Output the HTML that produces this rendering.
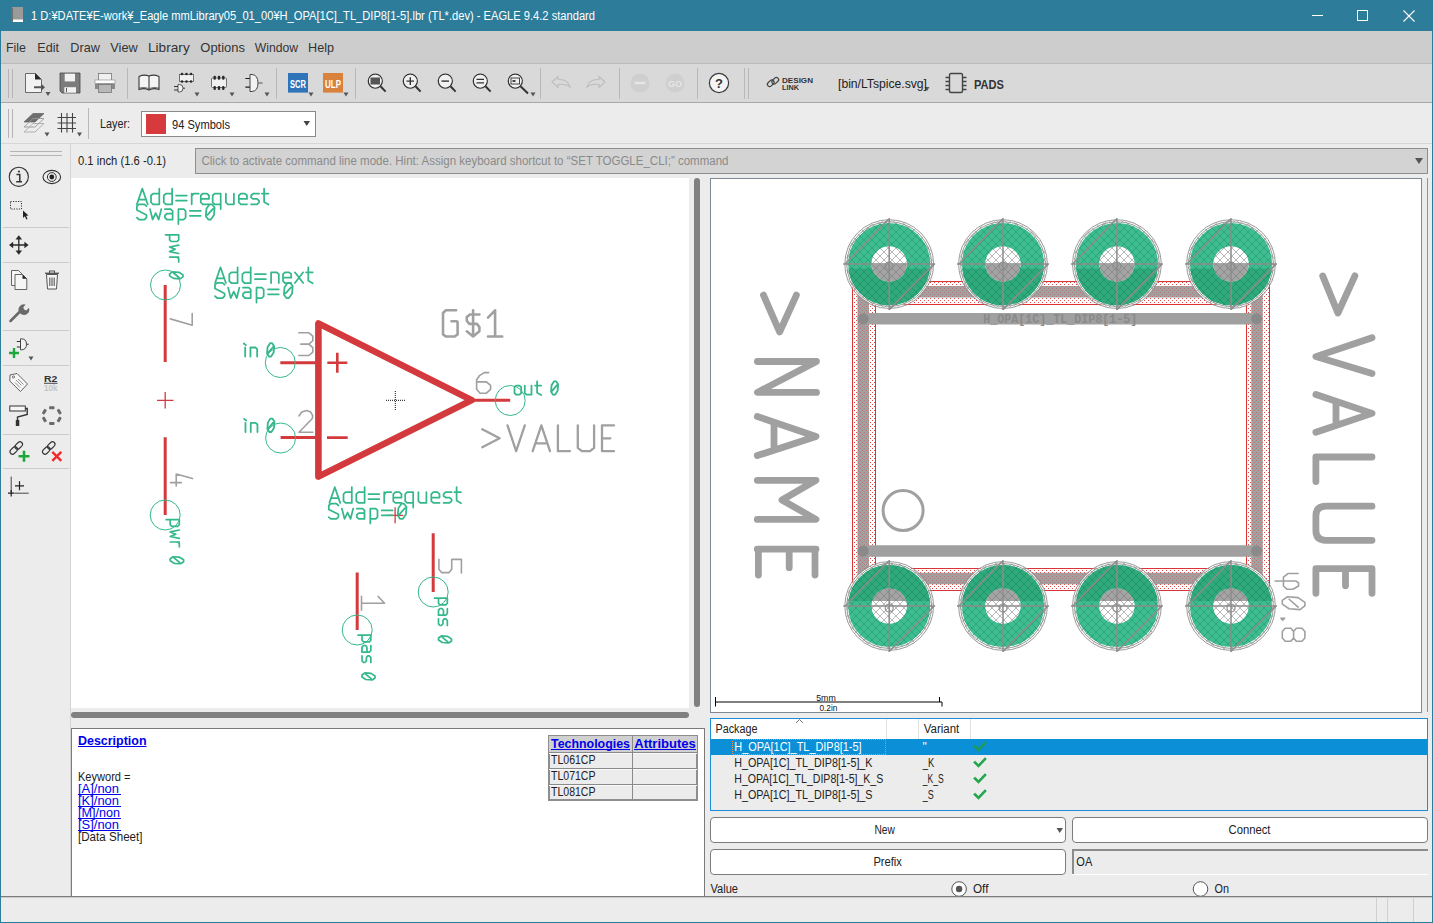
<!DOCTYPE html>
<html><head><meta charset="utf-8">
<style>
html,body{margin:0;padding:0;width:1433px;height:923px;overflow:hidden;background:#ececec;}
svg{display:block;}
text{font-family:"Liberation Sans",sans-serif;}
.m{font-family:"Liberation Mono",monospace;}
</style></head><body>
<svg width="1433" height="923" viewBox="0 0 1433 923">
<defs>
<pattern id="hatch" patternUnits="userSpaceOnUse" width="4" height="4">
<rect width="4" height="4" fill="#3cbc90"/>
<path d="M0 4 L4 0 M0 0 L4 4" stroke="#2ea67a" stroke-width="0.8"/>
</pattern>
<pattern id="reddots" patternUnits="userSpaceOnUse" width="4" height="4">
<rect x="1" y="1" width="1.2" height="1.2" fill="#e05050"/>
</pattern>
</defs>
<rect x="0" y="0" width="1433" height="923" fill="#ececec"/>
<!-- title bar -->
<rect x="0" y="0" width="1433" height="31" fill="#2d7d9a"/>
<rect x="0" y="0" width="1" height="923" fill="#2d7d9a"/>
<rect x="1432" y="0" width="1" height="923" fill="#2d7d9a"/>
<rect x="0" y="922" width="1433" height="1" fill="#2d7d9a"/>
<g><rect x="12" y="7" width="11" height="13" fill="#9a9a9a"/><rect x="11" y="8" width="2" height="14" fill="#6e6e6e"/><rect x="13" y="19.5" width="10" height="2.5" fill="#ffffff"/></g>
<text x="31" y="19.5" font-size="12" fill="#ffffff" textLength="564" lengthAdjust="spacingAndGlyphs">1 D:¥DATE¥E-work¥_Eagle mmLibrary05_01_00¥H_OPA[1C]_TL_DIP8[1-5].lbr (TL*.dev) - EAGLE 9.4.2 standard</text>
<rect x="1312" y="15" width="11" height="1" fill="#ffffff"/>
<rect x="1357.5" y="10.5" width="10" height="10" fill="none" stroke="#ffffff" stroke-width="1"/>
<path d="M1403.5 10.5 L1414.5 21.5 M1414.5 10.5 L1403.5 21.5" stroke="#ffffff" stroke-width="1.1"/>
<!-- menu bar -->
<rect x="1" y="31" width="1431" height="32" fill="#cdcdcd"/>
<rect x="1" y="63" width="1431" height="1" fill="#bababa"/>
<g font-size="13.5" fill="#333333">
<text x="6" y="52" textLength="20" lengthAdjust="spacingAndGlyphs">File</text>
<text x="37.3" y="52" textLength="21.7" lengthAdjust="spacingAndGlyphs">Edit</text>
<text x="70.3" y="52" textLength="29.6" lengthAdjust="spacingAndGlyphs">Draw</text>
<text x="110.3" y="52" textLength="27.4" lengthAdjust="spacingAndGlyphs">View</text>
<text x="148" y="52" textLength="41.7" lengthAdjust="spacingAndGlyphs">Library</text>
<text x="200.3" y="52" textLength="44.7" lengthAdjust="spacingAndGlyphs">Options</text>
<text x="254.7" y="52" textLength="43.3" lengthAdjust="spacingAndGlyphs">Window</text>
<text x="308" y="52" textLength="26" lengthAdjust="spacingAndGlyphs">Help</text>
</g>
<!-- toolbar 1 -->
<rect x="1" y="64" width="1431" height="38" fill="#d9d9d9"/>
<rect x="1" y="102" width="1431" height="1" fill="#a8a8a8"/>
<!-- toolbar 2 -->
<rect x="1" y="103" width="1431" height="40" fill="#ececec"/>
<rect x="1" y="143" width="1431" height="1" fill="#d6d6d6"/>
<!-- left panel -->
<rect x="70" y="144" width="1" height="753" fill="#d4d4d4"/>
<!-- command line -->
<text x="78" y="165" font-size="12" fill="#222" textLength="88" lengthAdjust="spacingAndGlyphs">0.1 inch (1.6 -0.1)</text>
<rect x="195.5" y="148.5" width="1232" height="25" fill="#d3d3d3" stroke="#8e8e8e" stroke-width="1"/>
<text x="201.5" y="164.5" font-size="12" fill="#8a8a8a" textLength="527" lengthAdjust="spacingAndGlyphs">Click to activate command line mode. Hint: Assign keyboard shortcut to “SET TOGGLE_CLI;” command</text>
<path d="M1415 158 L1423 158 L1419 164 Z" fill="#555"/>
<!-- schematic canvas -->
<rect x="71" y="178" width="618" height="530" fill="#ffffff"/>
<rect x="694" y="178" width="6" height="529" rx="3" fill="#808080"/>
<rect x="71" y="712" width="618" height="6" rx="3" fill="#808080"/>
<!-- preview -->
<rect x="710.5" y="178.5" width="711" height="534" fill="#ffffff" stroke="#7d8a96" stroke-width="1"/>
<rect x="1427" y="178" width="1" height="534" fill="#8a96a2"/>

<!-- grips -->
<g fill="#b4b4b4">
<rect x="8" y="69" width="1" height="29"/><rect x="12" y="69" width="1" height="29"/>
<rect x="8" y="109" width="1" height="29"/><rect x="12" y="109" width="1" height="29"/>
<rect x="10" y="151" width="52" height="1"/><rect x="10" y="155" width="52" height="1"/>
</g>
<!-- separators toolbar1 -->
<g fill="#b8b8b8">
<rect x="127" y="68" width="1" height="31"/>
<rect x="276" y="68" width="1" height="31"/>
<rect x="355" y="68" width="1" height="31"/>
<rect x="540" y="68" width="1" height="31"/>
<rect x="619" y="68" width="1" height="31"/>
<rect x="697" y="68" width="1" height="31"/>
<rect x="744" y="68" width="1" height="31"/>
<rect x="748" y="68" width="1" height="31"/>
<rect x="88" y="108" width="1" height="31"/>
</g>
<!-- dropdown arrows -->
<g fill="#555555">
<path d="M45.5 92 L50.5 92 L48 96 Z"/>
<path d="M194.5 92.5 L199.5 92.5 L197 96.5 Z"/>
<path d="M229.5 92.5 L234.5 92.5 L232 96.5 Z"/>
<path d="M264.5 92.5 L269.5 92.5 L267 96.5 Z"/>
<path d="M308.5 92.5 L313.5 92.5 L311 96.5 Z"/>
<path d="M343.5 92.5 L348.5 92.5 L346 96.5 Z"/>
<path d="M530.5 92.5 L535.5 92.5 L533 96.5 Z"/>
<path d="M924.5 87 L929.5 87 L927 91 Z"/>
<path d="M44.5 132.5 L49.5 132.5 L47 136.5 Z"/>
<path d="M77 132.5 L82 132.5 L79.5 136.5 Z"/>
<path d="M28.5 356.5 L33.5 356.5 L31 360.5 Z"/>
</g>
<!-- new -->
<path d="M25.5 73.5 L35.5 73.5 L41.5 79.5 L41.5 92.5 L25.5 92.5 Z" fill="#f2f2f2" stroke="#6a6a6a" stroke-width="1"/>
<path d="M35 73 L41.5 79.5 L35 79.5 Z" fill="#2a2a2a"/>
<path d="M34 86.2 L41 86.2 L41 83.5 L45 87.2 L41 91 L41 88.2 L34 88.2 Z" fill="#555555"/>
<!-- save -->
<path d="M60 73 L80 73 L80 93 L62 93 L60 91 Z" fill="#7c7c7c" stroke="#4a4a4a" stroke-width="0.8"/>
<rect x="64.7" y="73.7" width="10.3" height="7.7" fill="#f2f2f2"/>
<rect x="64.3" y="87.2" width="11.7" height="5.5" fill="#f2f2f2"/>
<rect x="66" y="88" width="1" height="4" fill="#555"/>
<!-- print -->
<rect x="98.5" y="73.5" width="13" height="7" fill="#f0f0f0" stroke="#777" stroke-width="0.8"/>
<rect x="95" y="80" width="20" height="3.5" fill="#ffffff" stroke="#888" stroke-width="0.6"/>
<rect x="95" y="83.5" width="20" height="5.5" fill="#8a8a8a"/>
<rect x="98.5" y="84.5" width="13" height="8" fill="#b8b8b8" stroke="#777" stroke-width="0.8"/>
<!-- book -->
<path d="M139 76.5 Q144 74 149 76 Q154 74 159 76.5 L159 89.5 Q154 87.5 149 90 Q144 87.5 139 89.5 Z" fill="#f4f4f4" stroke="#3a3a3a" stroke-width="1.1"/>
<path d="M149 76 L149 90" stroke="#3a3a3a" stroke-width="1.1"/>
<path d="M139 88 Q144 86.5 149 88.5 Q154 86.5 159 88" fill="none" stroke="#555" stroke-width="0.8"/>
<!-- device: chip + small gate -->
<rect x="179.5" y="74.5" width="14" height="7" fill="#f0f0f0" stroke="#555" stroke-width="0.8"/>
<g fill="#2a2a2a"><circle cx="182" cy="74" r="1.3"/><circle cx="186.5" cy="74" r="1.3"/><circle cx="191" cy="74" r="1.3"/><circle cx="182" cy="81.5" r="1.3"/><circle cx="186.5" cy="81.5" r="1.3"/><circle cx="191" cy="81.5" r="1.3"/></g>
<path d="M178 84.5 L179.5 84.5 Q183 84.5 183 88.2 Q183 92 179.5 92 L178 92 Z" fill="#f2f2f2" stroke="#333" stroke-width="0.8"/>
<path d="M174 86.5 L178 86.5 M174 90 L178 90 M183 88.2 L185 88.2" stroke="#333" stroke-width="1"/>
<!-- package chip -->
<rect x="211.5" y="78" width="15" height="9.5" rx="1" fill="#f0f0f0" stroke="#555" stroke-width="0.8"/>
<g fill="#2a2a2a"><rect x="213.5" y="75.8" width="2.4" height="4" rx="1"/><rect x="217.8" y="75.8" width="2.4" height="4" rx="1"/><rect x="222.1" y="75.8" width="2.4" height="4" rx="1"/><rect x="213.5" y="86" width="2.4" height="4" rx="1"/><rect x="217.8" y="86" width="2.4" height="4" rx="1"/><rect x="222.1" y="86" width="2.4" height="4" rx="1"/></g>
<!-- gate -->
<path d="M250 74.5 L252 74.5 Q258 75 258 83 Q258 91 252 91.5 L250 91.5 Z" fill="#f2f2f2" stroke="#333" stroke-width="0.9"/>
<path d="M245.3 78.5 L250 78.5 M245.3 87.2 L250 87.2" stroke="#222" stroke-width="1.2"/>
<path d="M258 83 L262.5 83" stroke="#777" stroke-width="1.4"/>
<!-- SCR ULP -->
<rect x="288" y="73" width="20" height="19.6" fill="#2f73b9"/>
<text x="298" y="87.5" font-size="10" font-weight="bold" fill="#ffffff" text-anchor="middle" textLength="16" lengthAdjust="spacingAndGlyphs">SCR</text>
<rect x="323" y="73" width="20" height="19.6" fill="#d9823e"/>
<text x="333" y="87.5" font-size="10" font-weight="bold" fill="#ffffff" text-anchor="middle" textLength="16" lengthAdjust="spacingAndGlyphs">ULP</text>
<!-- zoom icons -->
<g fill="none" stroke="#333" stroke-width="1.3">
<circle cx="375.3" cy="81.1" r="7"/><path d="M380.5 86.3 L385.6 91.6" stroke-width="2"/>
<circle cx="410.3" cy="81.1" r="7"/><path d="M415.5 86.3 L420.6 91.6" stroke-width="2"/>
<circle cx="445.3" cy="81.1" r="7"/><path d="M450.5 86.3 L455.6 91.6" stroke-width="2"/>
<circle cx="480.3" cy="81.1" r="7"/><path d="M485.5 86.3 L490.6 91.6" stroke-width="2"/>
<circle cx="515.3" cy="81.1" r="7"/><path d="M520.5 86.3 L528 93.5" stroke-width="2"/>
</g>
<g fill="#f0f0f0"><circle cx="410.3" cy="81.1" r="6.3"/><circle cx="445.3" cy="81.1" r="6.3"/><circle cx="480.3" cy="81.1" r="6.3"/><circle cx="515.3" cy="81.1" r="6.3"/><circle cx="375.3" cy="81.1" r="6.3"/></g>
<rect x="370.5" y="77.5" width="9.5" height="7" fill="#555"/>
<path d="M406.5 81.1 L414 81.1 M410.3 77.3 L410.3 85" stroke="#333" stroke-width="1.4"/>
<path d="M441.5 81.1 L449 81.1" stroke="#333" stroke-width="1.4"/>
<path d="M476.5 79.3 L484 79.3 M476.5 82.9 L484 82.9" stroke="#333" stroke-width="1.3"/>
<rect x="511" y="78" width="8.5" height="6" fill="none" stroke="#444" stroke-width="1"/><rect x="512.5" y="80" width="3" height="2" fill="#444"/>
<!-- undo redo (disabled) -->
<path d="M552 82 L558 76.5 L558 79.5 Q568 79 570 87 Q566 83.5 558 84.5 L558 87.5 Z" fill="none" stroke="#bdbdbd" stroke-width="1.1"/>
<path d="M605 82 L599 76.5 L599 79.5 Q589 79 587 87 Q591 83.5 599 84.5 L599 87.5 Z" fill="none" stroke="#bdbdbd" stroke-width="1.1"/>
<circle cx="640" cy="83" r="9.5" fill="#cfcfcf"/><rect x="634.5" y="81.8" width="11" height="2.4" fill="#e6e6e6"/>
<circle cx="675" cy="83" r="9.5" fill="#cfcfcf"/><text x="675" y="87" font-size="9" font-weight="bold" fill="#e6e6e6" text-anchor="middle">GO</text>
<!-- help -->
<circle cx="719" cy="83" r="9.6" fill="#f4f4f4" stroke="#3a3a3a" stroke-width="1.2"/>
<text x="719" y="88" font-size="13" font-weight="bold" fill="#333" text-anchor="middle">?</text>
<!-- design link -->
<g fill="none" stroke="#444" stroke-width="1.2"><rect x="767" y="81" width="7.5" height="4.5" rx="2.2" transform="rotate(-45 770.75 83.25)"/><rect x="771.5" y="78.5" width="7.5" height="4.5" rx="2.2" transform="rotate(-45 775.25 80.75)"/></g>
<text x="782" y="82.5" font-size="8" font-weight="bold" fill="#333" textLength="31" lengthAdjust="spacingAndGlyphs">DESIGN</text>
<text x="782" y="90" font-size="8" font-weight="bold" fill="#333" textLength="17" lengthAdjust="spacingAndGlyphs">LINK</text>
<text x="838" y="88" font-size="13" fill="#222" textLength="89" lengthAdjust="spacingAndGlyphs">[bin/LTspice.svg]</text>
<!-- PADS -->
<rect x="949.5" y="73.5" width="13" height="19" rx="1.5" fill="none" stroke="#444" stroke-width="1.4"/>
<g stroke="#444" stroke-width="1.6"><path d="M945.5 77.5 L949.5 77.5 M945.5 81.5 L949.5 81.5 M945.5 85.5 L949.5 85.5 M945.5 89.5 L949.5 89.5 M962.5 77.5 L966.5 77.5 M962.5 81.5 L966.5 81.5 M962.5 85.5 L966.5 85.5 M962.5 89.5 L966.5 89.5"/></g>
<text x="974" y="88.5" font-size="12.5" font-weight="bold" fill="#333" textLength="30" lengthAdjust="spacingAndGlyphs">PADS</text>
<!-- toolbar 2 -->
<path d="M24 122 L33 113.5 L44 113.5 L35 122 Z" fill="#6e6e6e" stroke="#555" stroke-width="0.6"/>
<path d="M24 127 L33 118.5 L44 118.5 L35 127 Z" fill="none" stroke="#999" stroke-width="0.9"/>
<path d="M24 132 L33 123.5 L44 123.5 L35 132 Z" fill="none" stroke="#aaa" stroke-width="0.9"/>
<g stroke="#444" stroke-width="1.1"><path d="M57.5 117.5 L76 117.5 M57.5 123 L76 123 M57.5 128.5 L76 128.5 M61.5 113 L61.5 132.5 M67 113 L67 132.5 M72.5 113 L72.5 132.5"/></g>
<text x="100" y="128" font-size="12" fill="#222" textLength="30" lengthAdjust="spacingAndGlyphs">Layer:</text>
<rect x="141.5" y="111.5" width="174" height="25" fill="#ffffff" stroke="#8a8a8a" stroke-width="1"/>
<rect x="146" y="114" width="20" height="20" fill="#d63a3d"/>
<text x="172" y="128.5" font-size="12.5" fill="#222" textLength="58" lengthAdjust="spacingAndGlyphs">94 Symbols</text>
<path d="M303.5 121 L310 121 L306.75 126 Z" fill="#444"/>

<!-- left separators -->
<g fill="#cbcbcb">
<rect x="3" y="227" width="66" height="1"/>
<rect x="3" y="262" width="66" height="1"/>
<rect x="3" y="330" width="66" height="1"/>
<rect x="3" y="365" width="66" height="1"/>
<rect x="3" y="434" width="66" height="1"/>
<rect x="3" y="468" width="66" height="1"/>
</g>
<!-- info -->
<circle cx="18.8" cy="176.8" r="9.6" fill="none" stroke="#333" stroke-width="1.1"/>
<circle cx="18.9" cy="171.5" r="1.1" fill="#333"/>
<path d="M16.5 174.5 L19.8 174.5 L19.8 181.5 M16.2 181.8 L22 181.8" fill="none" stroke="#333" stroke-width="1.5"/>
<!-- eye -->
<ellipse cx="51.8" cy="177" rx="8.8" ry="6.6" fill="none" stroke="#333" stroke-width="1.1"/>
<circle cx="51.8" cy="177" r="4.4" fill="none" stroke="#333" stroke-width="1"/>
<circle cx="51.8" cy="177" r="2.4" fill="#222"/>
<!-- select -->
<rect x="10.5" y="201.5" width="11" height="7.5" fill="none" stroke="#333" stroke-width="1" stroke-dasharray="1.2,1.3"/>
<path d="M23 210.5 L23 218 L24.8 216.3 L26.3 219.5 L27.5 219 L26.1 215.8 L28.5 215.6 Z" fill="#222"/>
<!-- move -->
<g fill="#2a2a2a"><path d="M18.8 235.3 L15.5 239.5 L22.1 239.5 Z"/><path d="M18.8 254.7 L15.5 250.5 L22.1 250.5 Z"/><path d="M9 245 L13.2 241.7 L13.2 248.3 Z"/><path d="M28.6 245 L24.4 241.7 L24.4 248.3 Z"/></g>
<path d="M18.8 238 L18.8 252 M12 245 L25.6 245" stroke="#2a2a2a" stroke-width="1.3"/>
<!-- copy -->
<path d="M11.5 270.5 L18.5 270.5 L22.5 274.5 L22.5 285.5 L11.5 285.5 Z" fill="#f6f6f6" stroke="#555" stroke-width="0.9"/>
<path d="M15 274.5 L22.5 274.5 L26.8 278.8 L26.8 289.5 L15 289.5 Z" fill="#f6f6f6" stroke="#555" stroke-width="0.9"/>
<path d="M22.5 274.5 L26.8 278.8 L22.5 278.8 Z" fill="#222"/>
<!-- trash -->
<path d="M45 273.3 L59 273.3" stroke="#555" stroke-width="1.4"/>
<path d="M49.5 273 L49.5 271 L54.5 271 L54.5 273" fill="none" stroke="#555" stroke-width="1.1"/>
<path d="M46.5 274.5 L57.5 274.5 L56.5 289 L47.5 289 Z" fill="#f6f6f6" stroke="#555" stroke-width="1"/>
<path d="M49.8 277.5 L49.8 286 M52 277.5 L52 286 M54.2 277.5 L54.2 286" stroke="#555" stroke-width="1.1"/>
<!-- wrench -->
<path d="M10.5 321 L21 310.5" stroke="#6a6a6a" stroke-width="2.6" stroke-linecap="round"/>
<path d="M19.2 312.2 A5.3 5.3 0 0 1 25.6 304.6 L23.2 307.6 L24.2 309.6 L26.3 310.4 L28.9 307.7 A5.3 5.3 0 0 1 21.3 314.2 Z" fill="#6a6a6a"/>
<!-- add gate -->
<path d="M20.5 338.8 L21.5 338.8 Q26.5 339 26.5 344.3 Q26.5 349.6 21.5 349.8 L20.5 349.8 Z" fill="#f2f2f2" stroke="#333" stroke-width="0.9"/>
<path d="M16.8 341.5 L20.5 341.5 M16.8 347 L20.5 347 M26.5 344.3 L28.7 344.3" stroke="#333" stroke-width="1.1"/>
<path d="M9 353 L19 353 M14 348 L14 358" stroke="#1ea83c" stroke-width="2.4"/>
<!-- tag -->
<path d="M10 375 L17 373.5 L27.5 384 L20.5 391.5 L9.8 381 Z" fill="#f6f6f6" stroke="#555" stroke-width="0.9"/>
<circle cx="13.5" cy="377" r="1.1" fill="none" stroke="#555" stroke-width="0.8"/>
<path d="M16 380 L21.5 385.5 M15 382.5 L20 387.5 M18 379 L23.5 384.5" stroke="#666" stroke-width="0.7"/>
<!-- R2 10k -->
<text x="44" y="381.6" font-size="9" font-weight="bold" fill="#333" textLength="13.3" lengthAdjust="spacingAndGlyphs">R2</text>
<rect x="44" y="382.8" width="13.5" height="0.9" fill="#333"/>
<text x="44" y="390.8" font-size="8.5" font-weight="bold" fill="#c4c4c4" textLength="13.5" lengthAdjust="spacingAndGlyphs">10k</text>
<!-- paint roller -->
<rect x="9.8" y="406" width="15.5" height="5" fill="#f6f6f6" stroke="#333" stroke-width="1"/>
<path d="M25.3 408.5 L27.2 408.5 L27.2 414.5 L17.5 417 L17.5 420" fill="none" stroke="#333" stroke-width="1.4"/>
<path d="M15.8 420 L19.3 420 L19.3 426 L15.8 426 Z" fill="#333"/>
<!-- dotted circle -->
<g fill="#6a6a6a"><rect x="49.1" y="406.3" width="5.4" height="3" rx="0.8" transform="rotate(0 51.8 407.8)"/><rect x="49.1" y="421.9" width="5.4" height="3" rx="0.8" transform="rotate(0 51.8 423.4)"/><rect x="56.5" y="410.2" width="5.4" height="3" rx="0.8" transform="rotate(60 59.2 411.7)"/><rect x="56.5" y="418" width="5.4" height="3" rx="0.8" transform="rotate(-60 59.2 419.5)"/><rect x="41.7" y="410.2" width="5.4" height="3" rx="0.8" transform="rotate(-60 44.4 411.7)"/><rect x="41.7" y="418" width="5.4" height="3" rx="0.8" transform="rotate(60 44.4 419.5)"/></g>
<!-- link + -->
<g fill="none" stroke="#333" stroke-width="1.1"><rect x="9.5" y="448" width="8.5" height="5" rx="2.5" transform="rotate(-45 13.75 450.5)"/><rect x="14.5" y="443" width="8.5" height="5" rx="2.5" transform="rotate(-45 18.75 445.5)"/></g>
<path d="M18.5 456.3 L29.5 456.3 M24 450.8 L24 461.8" stroke="#1ea83c" stroke-width="2.6"/>
<!-- link x -->
<g fill="none" stroke="#333" stroke-width="1.1"><rect x="42" y="448" width="8.5" height="5" rx="2.5" transform="rotate(-45 46.25 450.5)"/><rect x="47" y="443" width="8.5" height="5" rx="2.5" transform="rotate(-45 51.25 445.5)"/></g>
<path d="M52.3 451.8 L61.3 460.8 M61.3 451.8 L52.3 460.8" stroke="#ee2a2a" stroke-width="2.4"/>
<!-- mark -->
<path d="M11.2 476.6 L11.2 493.2 M15 493.2 L28.7 493.2" stroke="#333" stroke-width="0.9"/>
<path d="M15 485.8 L24 485.8 M19.5 481.3 L19.5 490.3" stroke="#222" stroke-width="1.2"/>
<path d="M8 493.2 L14.5 493.2 M11.2 490 L11.2 496.5" stroke="#222" stroke-width="1.2"/>

<g id="schem">
<g stroke="#d33a3e" stroke-width="3" stroke-linecap="butt">
<path d="M165.2 285 L165.2 362 M165.2 437.3 L165.2 515 M280.3 362.8 L318.5 362.8 M280.6 437.6 L318.5 437.6 M473 400.3 L510.2 400.3 M357.2 572.5 L357.2 630 M433.2 533.2 L433.2 592"/>
</g>
<path d="M157 400.3 L173.5 400.3 M165.2 392 L165.2 408.5 M387 515.3 L403.2 515.3 M395.1 507.3 L395.1 523.3" stroke="#d33a3e" stroke-width="1.3"/>
<path d="M318.4 323.4 L318.4 476.6 L471.7 400.1 Z" fill="none" stroke="#d33a3e" stroke-width="6.6" stroke-linejoin="round"/>
<path d="M327.3 362.8 L347.3 362.8 M337.3 352.8 L337.3 372.8 M327 437.6 L347.7 437.6" stroke="#d33a3e" stroke-width="2.6"/>
<g fill="#111"><rect x="386" y="399.8" width="1" height="1"/><rect x="388" y="399.8" width="1" height="1"/><rect x="390" y="399.8" width="1" height="1"/><rect x="392" y="399.8" width="1" height="1"/><rect x="394" y="399.8" width="1" height="1"/><rect x="396" y="399.8" width="1" height="1"/><rect x="398" y="399.8" width="1" height="1"/><rect x="400" y="399.8" width="1" height="1"/><rect x="402" y="399.8" width="1" height="1"/><rect x="404" y="399.8" width="1" height="1"/><rect x="394.8" y="391" width="1" height="1"/><rect x="394.8" y="393" width="1" height="1"/><rect x="394.8" y="395" width="1" height="1"/><rect x="394.8" y="397" width="1" height="1"/><rect x="394.8" y="399" width="1" height="1"/><rect x="394.8" y="401" width="1" height="1"/><rect x="394.8" y="403" width="1" height="1"/><rect x="394.8" y="405" width="1" height="1"/><rect x="394.8" y="407" width="1" height="1"/><rect x="394.8" y="409" width="1" height="1"/></g>
<g fill="none" stroke="#34b88a" stroke-width="1">
<circle cx="165.5" cy="285" r="15"/>
<circle cx="165.2" cy="515" r="15"/>
<circle cx="280.3" cy="362.5" r="15"/>
<circle cx="280.6" cy="438" r="15"/>
<circle cx="510.2" cy="400.5" r="15"/>
<circle cx="357.2" cy="630" r="15"/>
<circle cx="433.2" cy="592" r="15"/>
</g>
<path d="M136.90 204.30 L142.30 188.60 L147.70 204.30 M138.56 199.59 L146.04 199.59 M159.30 188.60 L159.30 204.30 L153.07 204.30 L151.00 202.42 L151.00 195.51 L153.07 193.62 L159.30 193.62 M172.10 188.60 L172.10 204.30 L165.88 204.30 L163.80 202.42 L163.80 195.51 L165.88 193.62 L172.10 193.62 M176.00 195.51 L186.80 195.51 M176.00 200.53 L186.80 200.53 M191.70 204.30 L191.70 193.62 M191.70 195.98 L193.64 193.62 L198.70 193.62 M209.00 204.30 L202.85 204.30 L200.80 202.42 L200.80 195.51 L202.85 193.62 L206.95 193.62 L209.00 195.51 L209.00 198.96 L200.80 198.96 M220.70 209.01 L220.70 193.62 L214.70 193.62 L212.70 195.51 L212.70 202.42 L214.70 204.30 L220.70 204.30 M225.90 193.62 L225.90 202.42 L227.90 204.30 L233.90 204.30 M233.90 193.62 L233.90 204.30 M247.00 204.30 L240.85 204.30 L238.80 202.42 L238.80 195.51 L240.85 193.62 L244.95 193.62 L247.00 195.51 L247.00 198.96 L238.80 198.96 M259.10 193.62 L253.10 193.62 L251.10 195.51 L251.10 197.39 L253.10 198.96 L257.10 198.96 L259.10 200.85 L259.10 202.42 L257.10 204.30 L251.10 204.30 M264.10 188.60 L264.10 201.95 L268.50 204.61 M261.90 193.62 L268.50 193.62" fill="none" stroke="#34b88a" stroke-width="1.75" stroke-linecap="round" stroke-linejoin="round"/>
<path d="M215.10 283.00 L220.50 267.30 L225.90 283.00 M216.76 278.29 L224.24 278.29 M237.60 267.30 L237.60 283.00 L231.38 283.00 L229.30 281.12 L229.30 274.21 L231.38 272.32 L237.60 272.32 M250.70 267.30 L250.70 283.00 L244.48 283.00 L242.40 281.12 L242.40 274.21 L244.48 272.32 L250.70 272.32 M255.00 274.21 L265.80 274.21 M255.00 279.23 L265.80 279.23 M271.10 283.00 L271.10 272.32 M271.10 272.32 L276.88 272.32 L278.80 274.21 L278.80 283.00 M291.20 283.00 L285.05 283.00 L283.00 281.12 L283.00 274.21 L285.05 272.32 L289.15 272.32 L291.20 274.21 L291.20 277.66 L283.00 277.66 M294.90 272.32 L303.20 283.00 M303.20 272.32 L294.90 283.00 M308.30 267.30 L308.30 280.64 L312.70 283.31 M306.10 272.32 L312.70 272.32" fill="none" stroke="#34b88a" stroke-width="1.75" stroke-linecap="round" stroke-linejoin="round"/>
<path d="M329.40 502.90 L334.80 487.20 L340.20 502.90 M331.06 498.19 L338.54 498.19 M351.80 487.20 L351.80 502.90 L345.58 502.90 L343.50 501.02 L343.50 494.11 L345.58 492.22 L351.80 492.22 M364.60 487.20 L364.60 502.90 L358.38 502.90 L356.30 501.02 L356.30 494.11 L358.38 492.22 L364.60 492.22 M368.50 494.11 L379.30 494.11 M368.50 499.13 L379.30 499.13 M384.20 502.90 L384.20 492.22 M384.20 494.58 L386.14 492.22 L391.20 492.22 M401.50 502.90 L395.35 502.90 L393.30 501.02 L393.30 494.11 L395.35 492.22 L399.45 492.22 L401.50 494.11 L401.50 497.56 L393.30 497.56 M413.20 507.61 L413.20 492.22 L407.20 492.22 L405.20 494.11 L405.20 501.02 L407.20 502.90 L413.20 502.90 M418.40 492.22 L418.40 501.02 L420.40 502.90 L426.40 502.90 M426.40 492.22 L426.40 502.90 M439.50 502.90 L433.35 502.90 L431.30 501.02 L431.30 494.11 L433.35 492.22 L437.45 492.22 L439.50 494.11 L439.50 497.56 L431.30 497.56 M451.60 492.22 L445.60 492.22 L443.60 494.11 L443.60 495.99 L445.60 497.56 L449.60 497.56 L451.60 499.45 L451.60 501.02 L449.60 502.90 L443.60 502.90 M456.60 487.20 L456.60 500.54 L461.00 503.21 M454.40 492.22 L461.00 492.22" fill="none" stroke="#34b88a" stroke-width="1.75" stroke-linecap="round" stroke-linejoin="round"/>
<path d="M146.50 206.12 L144.41 204.30 L138.99 204.30 L136.90 206.12 L136.90 210.08 L146.50 214.94 L146.50 217.68 L144.41 219.50 L138.99 219.50 L136.90 217.68 M150.00 209.16 L152.61 219.50 L155.65 213.12 L158.69 219.50 L161.30 209.16 M164.90 209.16 L170.68 209.16 L172.60 210.99 L172.60 219.50 L166.83 219.50 L164.90 217.68 L164.90 215.40 L166.83 213.72 L172.60 213.72 M178.40 224.06 L178.40 209.16 L183.80 209.16 L185.60 210.99 L185.60 217.68 L183.80 219.50 L178.40 219.50 M189.90 210.99 L200.70 210.99 M189.90 215.85 L200.70 215.85 M208.32 219.50 L205.82 216.16 L206.40 208.86 L209.57 204.30 L212.08 204.30 L214.58 207.64 L214.00 214.94 L210.83 219.50 L208.32 219.50 M207.49 214.94 L212.91 208.86" fill="none" stroke="#34b88a" stroke-width="1.75" stroke-linecap="round" stroke-linejoin="round"/>
<path d="M224.60 284.62 L222.51 282.80 L217.09 282.80 L215.00 284.62 L215.00 288.58 L224.60 293.44 L224.60 296.18 L222.51 298.00 L217.09 298.00 L215.00 296.18 M228.10 287.66 L230.71 298.00 L233.75 291.62 L236.79 298.00 L239.40 287.66 M243.00 287.66 L248.78 287.66 L250.70 289.49 L250.70 298.00 L244.93 298.00 L243.00 296.18 L243.00 293.90 L244.93 292.22 L250.70 292.22 M256.50 302.56 L256.50 287.66 L261.90 287.66 L263.70 289.49 L263.70 296.18 L261.90 298.00 L256.50 298.00 M268.00 289.49 L278.80 289.49 M268.00 294.35 L278.80 294.35 M286.42 298.00 L283.92 294.66 L284.50 287.36 L287.67 282.80 L290.18 282.80 L292.68 286.14 L292.10 293.44 L288.93 298.00 L286.42 298.00 M285.59 293.44 L291.01 287.36" fill="none" stroke="#34b88a" stroke-width="1.75" stroke-linecap="round" stroke-linejoin="round"/>
<path d="M338.40 505.52 L336.31 503.70 L330.89 503.70 L328.80 505.52 L328.80 509.48 L338.40 514.34 L338.40 517.08 L336.31 518.90 L330.89 518.90 L328.80 517.08 M341.90 508.56 L344.51 518.90 L347.55 512.52 L350.59 518.90 L353.20 508.56 M356.80 508.56 L362.57 508.56 L364.50 510.39 L364.50 518.90 L358.73 518.90 L356.80 517.08 L356.80 514.80 L358.73 513.12 L364.50 513.12 M370.30 523.46 L370.30 508.56 L375.70 508.56 L377.50 510.39 L377.50 517.08 L375.70 518.90 L370.30 518.90 M381.80 510.39 L392.60 510.39 M381.80 515.25 L392.60 515.25 M400.22 518.90 L397.72 515.56 L398.30 508.26 L401.47 503.70 L403.98 503.70 L406.48 507.04 L405.90 514.34 L402.73 518.90 L400.22 518.90 M399.39 514.34 L404.81 508.26" fill="none" stroke="#34b88a" stroke-width="1.75" stroke-linecap="round" stroke-linejoin="round"/>
<path d="M245.18 347.49 L245.18 356.60 M243.84 343.47 L245.84 345.08 M250.45 356.60 L250.45 347.49 M250.45 347.49 L255.47 347.49 L257.15 349.10 L257.15 356.60 M269.10 356.60 L267.08 353.65 L267.55 347.22 L270.10 343.20 L272.11 343.20 L274.12 346.15 L273.65 352.58 L271.11 356.60 L269.10 356.60 M268.43 352.58 L272.78 347.22" fill="none" stroke="#34b88a" stroke-width="1.80" stroke-linecap="round" stroke-linejoin="round"/>
<path d="M245.48 422.89 L245.48 432.00 M244.14 418.87 L246.15 420.48 M250.75 432.00 L250.75 422.89 M250.75 422.89 L255.78 422.89 L257.45 424.50 L257.45 432.00 M269.40 432.00 L267.38 429.05 L267.85 422.62 L270.40 418.60 L272.41 418.60 L274.42 421.55 L273.95 427.98 L271.41 432.00 L269.40 432.00 M268.73 427.98 L273.08 422.62" fill="none" stroke="#34b88a" stroke-width="1.80" stroke-linecap="round" stroke-linejoin="round"/>
<path d="M516.17 394.70 L519.52 394.70 L521.20 393.09 L521.20 387.20 L519.52 385.59 L516.17 385.59 L514.50 387.20 L514.50 393.09 L516.17 394.70 M524.80 385.59 L524.80 393.09 L526.47 394.70 L531.50 394.70 M531.50 385.59 L531.50 394.70 M537.11 381.30 L537.11 392.69 L541.13 394.97 M535.10 385.59 L541.13 385.59 M553.07 394.70 L551.06 391.75 L551.53 385.32 L554.08 381.30 L556.09 381.30 L558.10 384.25 L557.63 390.68 L555.08 394.70 L553.07 394.70 M552.40 390.68 L556.76 385.32" fill="none" stroke="#34b88a" stroke-width="1.80" stroke-linecap="round" stroke-linejoin="round"/>
<path d="M169.60 238.82 L169.60 225.69 L174.62 225.69 L176.30 227.30 L176.30 233.19 L174.62 234.80 L169.60 234.80 M179.90 225.69 L181.84 234.80 L184.10 229.17 L186.36 234.80 L188.30 225.69 M191.90 234.80 L191.90 225.69 M191.90 227.70 L193.23 225.69 L196.70 225.69 M208.65 234.80 L206.64 231.85 L207.10 225.42 L209.65 221.40 L211.66 221.40 L213.67 224.35 L213.20 230.78 L210.66 234.80 L208.65 234.80 M207.98 230.78 L212.33 225.42" fill="none" stroke="#34b88a" stroke-width="1.70" stroke-linecap="round" stroke-linejoin="round" transform="rotate(90 169.60 234.80)"/>
<path d="M170.20 523.72 L170.20 510.59 L175.22 510.59 L176.90 512.20 L176.90 518.09 L175.22 519.70 L170.20 519.70 M180.50 510.59 L182.44 519.70 L184.70 514.07 L186.96 519.70 L188.90 510.59 M192.50 519.70 L192.50 510.59 M192.50 512.60 L193.83 510.59 L197.30 510.59 M209.25 519.70 L207.24 516.75 L207.70 510.32 L210.25 506.30 L212.26 506.30 L214.27 509.25 L213.80 515.68 L211.25 519.70 L209.25 519.70 M208.58 515.68 L212.93 510.32" fill="none" stroke="#34b88a" stroke-width="1.70" stroke-linecap="round" stroke-linejoin="round" transform="rotate(90 170.20 519.70)"/>
<path d="M362.00 639.10 L362.00 626.36 L367.02 626.36 L368.70 627.92 L368.70 633.64 L367.02 635.20 L362.00 635.20 M372.30 626.36 L377.32 626.36 L379.00 627.92 L379.00 635.20 L373.98 635.20 L372.30 633.64 L372.30 631.69 L373.98 630.26 L379.00 630.26 M389.30 626.36 L384.28 626.36 L382.60 627.92 L382.60 629.48 L384.28 630.78 L387.62 630.78 L389.30 632.34 L389.30 633.64 L387.62 635.20 L382.60 635.20 M401.75 635.20 L399.74 632.34 L400.20 626.10 L402.75 622.20 L404.76 622.20 L406.77 625.06 L406.30 631.30 L403.76 635.20 L401.75 635.20 M401.08 631.30 L405.43 626.10" fill="none" stroke="#34b88a" stroke-width="1.70" stroke-linecap="round" stroke-linejoin="round" transform="rotate(90 362.00 635.20)"/>
<path d="M438.50 602.10 L438.50 589.36 L443.52 589.36 L445.20 590.92 L445.20 596.64 L443.52 598.20 L438.50 598.20 M448.80 589.36 L453.82 589.36 L455.50 590.92 L455.50 598.20 L450.48 598.20 L448.80 596.64 L448.80 594.69 L450.48 593.26 L455.50 593.26 M465.80 589.36 L460.78 589.36 L459.10 590.92 L459.10 592.48 L460.78 593.78 L464.12 593.78 L465.80 595.34 L465.80 596.64 L464.12 598.20 L459.10 598.20 M478.25 598.20 L476.24 595.34 L476.70 589.10 L479.25 585.20 L481.26 585.20 L483.27 588.06 L482.80 594.30 L480.26 598.20 L478.25 598.20 M477.58 594.30 L481.93 589.10" fill="none" stroke="#34b88a" stroke-width="1.70" stroke-linecap="round" stroke-linejoin="round" transform="rotate(90 438.50 598.20)"/>
<path d="M298.80 332.80 L308.88 332.80 L312.80 336.20 L312.80 340.75 L308.88 344.15 L300.76 344.15 M308.88 344.15 L312.80 347.56 L312.80 352.10 L308.88 355.50 L298.80 355.50" fill="none" stroke="#a0a0a0" stroke-width="1.60" stroke-linecap="round" stroke-linejoin="round"/>
<path d="M299.00 415.93 L301.76 412.02 L306.59 410.50 L310.73 412.02 L312.80 415.93 L312.11 418.75 L299.00 432.20 L312.80 432.20" fill="none" stroke="#a0a0a0" stroke-width="1.60" stroke-linecap="round" stroke-linejoin="round"/>
<path d="M488.64 372.60 L484.30 372.60 L479.40 375.69 L476.60 379.81 L476.60 389.29 L480.10 393.20 L486.40 393.20 L490.60 389.29 L490.60 385.37 L486.40 381.87 L476.60 381.87" fill="none" stroke="#a0a0a0" stroke-width="1.60" stroke-linecap="round" stroke-linejoin="round"/>
<path d="M170.40 291.70 L182.10 291.70 L175.78 313.50" fill="none" stroke="#a0a0a0" stroke-width="1.60" stroke-linecap="round" stroke-linejoin="round" transform="rotate(90 170.40 313.50)"/>
<path d="M179.14 474.00 L179.14 463.22 M170.50 468.28 L182.50 468.28 M170.50 468.28 L175.06 452.00" fill="none" stroke="#a0a0a0" stroke-width="1.60" stroke-linecap="round" stroke-linejoin="round" transform="rotate(90 170.50 474.00)"/>
<path d="M361.50 579.74 L368.50 573.30 L368.50 596.30 M361.50 596.30 L375.50 596.30" fill="none" stroke="#a0a0a0" stroke-width="1.60" stroke-linecap="round" stroke-linejoin="round" transform="rotate(90 361.50 596.30)"/>
<path d="M452.50 536.90 L438.90 536.90 L438.90 546.57 L448.69 546.57 L452.09 549.27 L452.09 556.70 L448.69 559.40 L438.90 559.40" fill="none" stroke="#a0a0a0" stroke-width="1.60" stroke-linecap="round" stroke-linejoin="round" transform="rotate(90 438.90 559.40)"/>
<path d="M456.14 310.30 L445.92 310.30 L443.00 312.92 L443.00 334.40 L445.92 336.50 L454.68 336.50 L457.60 334.40 L457.60 321.83 L456.43 321.30 L451.47 321.30 M479.40 314.49 L469.95 314.49 L466.80 317.11 L466.80 320.78 L469.32 323.92 L476.88 323.92 L479.40 327.07 L479.40 331.26 L473.10 336.50 L466.80 331.26 M473.10 310.30 L473.10 336.50 M488.00 317.64 L495.10 310.30 L495.10 336.50 M488.00 336.50 L502.20 336.50" fill="none" stroke="#a0a0a0" stroke-width="2.60" stroke-linecap="round" stroke-linejoin="round"/>
<path d="M482.30 429.27 L499.60 438.30 L482.30 447.33 M507.50 425.40 L516.15 451.20 L524.80 425.40 M532.70 451.20 L541.35 425.40 L550.00 451.20 M535.36 443.46 L547.34 443.46 M557.90 425.40 L557.90 451.20 L569.90 451.20 M577.80 425.40 L577.80 447.85 L581.88 451.20 L590.03 451.20 L594.10 447.85 L594.10 425.40 M614.00 425.40 L602.00 425.40 L602.00 451.20 L614.00 451.20 M602.00 438.30 L610.40 438.30" fill="none" stroke="#a0a0a0" stroke-width="2.30" stroke-linecap="round" stroke-linejoin="round"/>
</g>
<defs>
<pattern id="rdots" patternUnits="userSpaceOnUse" x="0" y="0" width="4" height="4"><rect x="0" y="0" width="1" height="1" fill="#e04848"/><rect x="2" y="2" width="1" height="1" fill="#e04848"/></pattern>
<pattern id="ghatch" patternUnits="userSpaceOnUse" x="0" y="0" width="8" height="8"><rect width="8" height="8" fill="#3fbd91"/><rect x="4" y="4" width="1" height="1" fill="#2ba87b"/><rect x="0" y="7" width="1" height="1" fill="#2ba87b"/><rect x="5" y="5" width="1" height="1" fill="#2ba87b"/><rect x="7" y="7" width="1" height="1" fill="#2ba87b"/><rect x="3" y="4" width="1" height="1" fill="#2ba87b"/><rect x="0" y="0" width="1" height="1" fill="#2ba87b"/><rect x="4" y="3" width="1" height="1" fill="#2ba87b"/><rect x="6" y="1" width="1" height="1" fill="#2ba87b"/><rect x="1" y="1" width="1" height="1" fill="#2ba87b"/><rect x="7" y="0" width="1" height="1" fill="#2ba87b"/><rect x="3" y="3" width="1" height="1" fill="#2ba87b"/><rect x="2" y="2" width="1" height="1" fill="#2ba87b"/><rect x="6" y="6" width="1" height="1" fill="#2ba87b"/><rect x="1" y="6" width="1" height="1" fill="#2ba87b"/><rect x="2" y="5" width="1" height="1" fill="#2ba87b"/><rect x="5" y="2" width="1" height="1" fill="#2ba87b"/></pattern>
<pattern id="ghatch2" patternUnits="userSpaceOnUse" x="0" y="0" width="8" height="8"><rect width="8" height="8" fill="#30a97d"/><rect x="4" y="4" width="1" height="1" fill="#23976c"/><rect x="0" y="7" width="1" height="1" fill="#23976c"/><rect x="5" y="5" width="1" height="1" fill="#23976c"/><rect x="7" y="7" width="1" height="1" fill="#23976c"/><rect x="3" y="4" width="1" height="1" fill="#23976c"/><rect x="0" y="0" width="1" height="1" fill="#23976c"/><rect x="4" y="3" width="1" height="1" fill="#23976c"/><rect x="6" y="1" width="1" height="1" fill="#23976c"/><rect x="1" y="1" width="1" height="1" fill="#23976c"/><rect x="7" y="0" width="1" height="1" fill="#23976c"/><rect x="3" y="3" width="1" height="1" fill="#23976c"/><rect x="2" y="2" width="1" height="1" fill="#23976c"/><rect x="6" y="6" width="1" height="1" fill="#23976c"/><rect x="1" y="6" width="1" height="1" fill="#23976c"/><rect x="2" y="5" width="1" height="1" fill="#23976c"/><rect x="5" y="2" width="1" height="1" fill="#23976c"/></pattern>
<pattern id="whatch" patternUnits="userSpaceOnUse" x="0" y="0" width="8" height="8"><rect width="8" height="8" fill="#ffffff"/><rect x="4" y="4" width="1" height="1" fill="#b8b8b8"/><rect x="0" y="7" width="1" height="1" fill="#b8b8b8"/><rect x="5" y="5" width="1" height="1" fill="#b8b8b8"/><rect x="7" y="7" width="1" height="1" fill="#b8b8b8"/><rect x="3" y="4" width="1" height="1" fill="#b8b8b8"/><rect x="0" y="0" width="1" height="1" fill="#b8b8b8"/><rect x="4" y="3" width="1" height="1" fill="#b8b8b8"/><rect x="6" y="1" width="1" height="1" fill="#b8b8b8"/><rect x="1" y="1" width="1" height="1" fill="#b8b8b8"/><rect x="7" y="0" width="1" height="1" fill="#b8b8b8"/><rect x="3" y="3" width="1" height="1" fill="#b8b8b8"/><rect x="2" y="2" width="1" height="1" fill="#b8b8b8"/><rect x="6" y="6" width="1" height="1" fill="#b8b8b8"/><rect x="1" y="6" width="1" height="1" fill="#b8b8b8"/><rect x="2" y="5" width="1" height="1" fill="#b8b8b8"/><rect x="5" y="2" width="1" height="1" fill="#b8b8b8"/></pattern>
<pattern id="yhatch" patternUnits="userSpaceOnUse" x="0" y="0" width="8" height="8"><rect width="8" height="8" fill="#a4a4a4"/><rect x="4" y="4" width="1" height="1" fill="#8c8c8c"/><rect x="0" y="7" width="1" height="1" fill="#8c8c8c"/><rect x="5" y="5" width="1" height="1" fill="#8c8c8c"/><rect x="7" y="7" width="1" height="1" fill="#8c8c8c"/><rect x="3" y="4" width="1" height="1" fill="#8c8c8c"/><rect x="0" y="0" width="1" height="1" fill="#8c8c8c"/><rect x="4" y="3" width="1" height="1" fill="#8c8c8c"/><rect x="6" y="1" width="1" height="1" fill="#8c8c8c"/><rect x="1" y="1" width="1" height="1" fill="#8c8c8c"/><rect x="7" y="0" width="1" height="1" fill="#8c8c8c"/><rect x="3" y="3" width="1" height="1" fill="#8c8c8c"/><rect x="2" y="2" width="1" height="1" fill="#8c8c8c"/><rect x="6" y="6" width="1" height="1" fill="#8c8c8c"/><rect x="1" y="6" width="1" height="1" fill="#8c8c8c"/><rect x="2" y="5" width="1" height="1" fill="#8c8c8c"/><rect x="5" y="2" width="1" height="1" fill="#8c8c8c"/></pattern>
<clipPath id="padclip"><circle cx="889.2" cy="264.1" r="44.5"/><circle cx="889.2" cy="606" r="44.5"/><circle cx="1003" cy="264.1" r="44.5"/><circle cx="1003" cy="606" r="44.5"/><circle cx="1116.9" cy="264.1" r="44.5"/><circle cx="1116.9" cy="606" r="44.5"/><circle cx="1231" cy="264.1" r="44.5"/><circle cx="1231" cy="606" r="44.5"/></clipPath>
</defs>
<path d="M852.3 281.2 H1269.7 V590.8 H852.3 Z M875.5 304.6 V568.7 H1246.3 V304.6 Z" fill="url(#rdots)" fill-rule="evenodd"/>
<path d="M863.2 291.8 H1257 V578.6 H863.2 Z" fill="none" stroke="#a0a0a0" stroke-width="11.5" stroke-linejoin="miter"/>
<path d="M852.3 281.2 H1269.7 V590.8 H852.3 Z M875.5 304.6 V568.7 H1246.3 V304.6 Z" fill="url(#rdots)" fill-rule="evenodd" opacity="0.45"/>
<g fill="#dc3434"><rect x="852" y="281" width="418" height="1"/><rect x="852" y="590" width="418" height="1"/><rect x="852" y="281" width="1" height="310"/><rect x="1269" y="281" width="1" height="310"/><rect x="875" y="304" width="372" height="1"/><rect x="875" y="568" width="372" height="1"/><rect x="875" y="304" width="1" height="265"/><rect x="1246" y="304" width="1" height="265"/></g>
<path d="M863.2 318.8 H1257 M863.2 551 H1257" stroke="#a0a0a0" stroke-width="11.5"/>
<g fill="#8a8a8a"><circle cx="863.2" cy="318.8" r="5.6"/><circle cx="863.2" cy="551" r="5.6"/><circle cx="1256.6" cy="318.8" r="5.6"/><circle cx="1256.6" cy="551" r="5.6"/></g>
<circle cx="903.1" cy="510.5" r="20" fill="none" stroke="#a0a0a0" stroke-width="3"/>
<text class="m" x="983.2" y="323.4" font-size="13" font-weight="bold" fill="#8a8a8a" textLength="154" lengthAdjust="spacingAndGlyphs">H_OPA[1C]_TL_DIP8[1-5]</text>
<circle cx="889.2" cy="264.1" r="43.5" fill="url(#whatch)"/>
<circle cx="889.2" cy="264.1" r="42.4" fill="none" stroke="#8e8e8e" stroke-width="0.9"/>
<circle cx="889.2" cy="264.1" r="44.4" fill="none" stroke="#8e8e8e" stroke-width="0.9"/>
<circle cx="889.2" cy="264.1" r="29.3" fill="none" stroke="url(#ghatch)" stroke-width="23.5"/>
<circle cx="889.2" cy="264.1" r="17.6" fill="url(#whatch)"/>
<circle cx="1003" cy="264.1" r="43.5" fill="url(#whatch)"/>
<circle cx="1003" cy="264.1" r="42.4" fill="none" stroke="#8e8e8e" stroke-width="0.9"/>
<circle cx="1003" cy="264.1" r="44.4" fill="none" stroke="#8e8e8e" stroke-width="0.9"/>
<circle cx="1003" cy="264.1" r="29.3" fill="none" stroke="url(#ghatch)" stroke-width="23.5"/>
<circle cx="1003" cy="264.1" r="17.6" fill="url(#whatch)"/>
<circle cx="1116.9" cy="264.1" r="43.5" fill="url(#whatch)"/>
<circle cx="1116.9" cy="264.1" r="42.4" fill="none" stroke="#8e8e8e" stroke-width="0.9"/>
<circle cx="1116.9" cy="264.1" r="44.4" fill="none" stroke="#8e8e8e" stroke-width="0.9"/>
<circle cx="1116.9" cy="264.1" r="29.3" fill="none" stroke="url(#ghatch)" stroke-width="23.5"/>
<circle cx="1116.9" cy="264.1" r="17.6" fill="url(#whatch)"/>
<circle cx="1231" cy="264.1" r="43.5" fill="url(#whatch)"/>
<circle cx="1231" cy="264.1" r="42.4" fill="none" stroke="#8e8e8e" stroke-width="0.9"/>
<circle cx="1231" cy="264.1" r="44.4" fill="none" stroke="#8e8e8e" stroke-width="0.9"/>
<circle cx="1231" cy="264.1" r="29.3" fill="none" stroke="url(#ghatch)" stroke-width="23.5"/>
<circle cx="1231" cy="264.1" r="17.6" fill="url(#whatch)"/>
<circle cx="889.2" cy="606" r="43.5" fill="url(#whatch)"/>
<circle cx="889.2" cy="606" r="42.4" fill="none" stroke="#8e8e8e" stroke-width="0.9"/>
<circle cx="889.2" cy="606" r="44.4" fill="none" stroke="#8e8e8e" stroke-width="0.9"/>
<circle cx="889.2" cy="606" r="29.3" fill="none" stroke="url(#ghatch)" stroke-width="23.5"/>
<circle cx="889.2" cy="606" r="17.6" fill="url(#whatch)"/>
<circle cx="1003" cy="606" r="43.5" fill="url(#whatch)"/>
<circle cx="1003" cy="606" r="42.4" fill="none" stroke="#8e8e8e" stroke-width="0.9"/>
<circle cx="1003" cy="606" r="44.4" fill="none" stroke="#8e8e8e" stroke-width="0.9"/>
<circle cx="1003" cy="606" r="29.3" fill="none" stroke="url(#ghatch)" stroke-width="23.5"/>
<circle cx="1003" cy="606" r="17.6" fill="url(#whatch)"/>
<circle cx="1116.9" cy="606" r="43.5" fill="url(#whatch)"/>
<circle cx="1116.9" cy="606" r="42.4" fill="none" stroke="#8e8e8e" stroke-width="0.9"/>
<circle cx="1116.9" cy="606" r="44.4" fill="none" stroke="#8e8e8e" stroke-width="0.9"/>
<circle cx="1116.9" cy="606" r="29.3" fill="none" stroke="url(#ghatch)" stroke-width="23.5"/>
<circle cx="1116.9" cy="606" r="17.6" fill="url(#whatch)"/>
<circle cx="1231" cy="606" r="43.5" fill="url(#whatch)"/>
<circle cx="1231" cy="606" r="42.4" fill="none" stroke="#8e8e8e" stroke-width="0.9"/>
<circle cx="1231" cy="606" r="44.4" fill="none" stroke="#8e8e8e" stroke-width="0.9"/>
<circle cx="1231" cy="606" r="29.3" fill="none" stroke="url(#ghatch)" stroke-width="23.5"/>
<circle cx="1231" cy="606" r="17.6" fill="url(#whatch)"/>
<g clip-path="url(#padclip)">
<clipPath id="c889_264"><rect x="839.2" y="268.5" width="100" height="51.5"/></clipPath>
<clipPath id="h889_264"><rect x="839.2" y="264.8" width="100" height="55.2"/></clipPath>
<g clip-path="url(#c889_264)"><circle cx="889.2" cy="264.1" r="29.3" fill="none" stroke="url(#ghatch2)" stroke-width="23.5"/></g>
<g clip-path="url(#h889_264)"><circle cx="889.2" cy="264.1" r="17.6" fill="url(#yhatch)"/></g>
<clipPath id="c1003_264"><rect x="953" y="268.5" width="100" height="51.5"/></clipPath>
<clipPath id="h1003_264"><rect x="953" y="264.8" width="100" height="55.2"/></clipPath>
<g clip-path="url(#c1003_264)"><circle cx="1003" cy="264.1" r="29.3" fill="none" stroke="url(#ghatch2)" stroke-width="23.5"/></g>
<g clip-path="url(#h1003_264)"><circle cx="1003" cy="264.1" r="17.6" fill="url(#yhatch)"/></g>
<clipPath id="c1116_264"><rect x="1066.9" y="268.5" width="100" height="51.5"/></clipPath>
<clipPath id="h1116_264"><rect x="1066.9" y="264.8" width="100" height="55.2"/></clipPath>
<g clip-path="url(#c1116_264)"><circle cx="1116.9" cy="264.1" r="29.3" fill="none" stroke="url(#ghatch2)" stroke-width="23.5"/></g>
<g clip-path="url(#h1116_264)"><circle cx="1116.9" cy="264.1" r="17.6" fill="url(#yhatch)"/></g>
<clipPath id="c1231_264"><rect x="1181" y="268.5" width="100" height="51.5"/></clipPath>
<clipPath id="h1231_264"><rect x="1181" y="264.8" width="100" height="55.2"/></clipPath>
<g clip-path="url(#c1231_264)"><circle cx="1231" cy="264.1" r="29.3" fill="none" stroke="url(#ghatch2)" stroke-width="23.5"/></g>
<g clip-path="url(#h1231_264)"><circle cx="1231" cy="264.1" r="17.6" fill="url(#yhatch)"/></g>
<clipPath id="c889_606"><rect x="839.2" y="555" width="100" height="46"/></clipPath>
<clipPath id="h889_606"><rect x="839.2" y="555" width="100" height="46"/></clipPath>
<g clip-path="url(#c889_606)"><circle cx="889.2" cy="606" r="29.3" fill="none" stroke="url(#ghatch2)" stroke-width="23.5"/></g>
<g clip-path="url(#h889_606)"><circle cx="889.2" cy="606" r="17.6" fill="url(#yhatch)"/></g>
<clipPath id="c1003_606"><rect x="953" y="555" width="100" height="46"/></clipPath>
<clipPath id="h1003_606"><rect x="953" y="555" width="100" height="46"/></clipPath>
<g clip-path="url(#c1003_606)"><circle cx="1003" cy="606" r="29.3" fill="none" stroke="url(#ghatch2)" stroke-width="23.5"/></g>
<g clip-path="url(#h1003_606)"><circle cx="1003" cy="606" r="17.6" fill="url(#yhatch)"/></g>
<clipPath id="c1116_606"><rect x="1066.9" y="555" width="100" height="46"/></clipPath>
<clipPath id="h1116_606"><rect x="1066.9" y="555" width="100" height="46"/></clipPath>
<g clip-path="url(#c1116_606)"><circle cx="1116.9" cy="606" r="29.3" fill="none" stroke="url(#ghatch2)" stroke-width="23.5"/></g>
<g clip-path="url(#h1116_606)"><circle cx="1116.9" cy="606" r="17.6" fill="url(#yhatch)"/></g>
<clipPath id="c1231_606"><rect x="1181" y="555" width="100" height="46"/></clipPath>
<clipPath id="h1231_606"><rect x="1181" y="555" width="100" height="46"/></clipPath>
<g clip-path="url(#c1231_606)"><circle cx="1231" cy="606" r="29.3" fill="none" stroke="url(#ghatch2)" stroke-width="23.5"/></g>
<g clip-path="url(#h1231_606)"><circle cx="1231" cy="606" r="17.6" fill="url(#yhatch)"/></g>
</g>
<g stroke="#8c8c8c" stroke-width="1.5" fill="none">
<path d="M843.2 264.1 H935.2 M889.2 218.1 V310.1 M845.2 264.1 L889.2 218.6 M934.2 264.1 L889.2 309.6"/>
<path d="M957 264.1 H1049 M1003 218.1 V310.1 M959 264.1 L1003 218.6 M1048 264.1 L1003 309.6"/>
<path d="M1070.9 264.1 H1162.9 M1116.9 218.1 V310.1 M1072.9 264.1 L1116.9 218.6 M1161.9 264.1 L1116.9 309.6"/>
<path d="M1185 264.1 H1277 M1231 218.1 V310.1 M1187 264.1 L1231 218.6 M1276 264.1 L1231 309.6"/>
<path d="M843.2 606 H935.2 M889.2 560 V652 M845.2 606 L889.2 560.5 M934.2 606 L889.2 651.5"/>
<path d="M957 606 H1049 M1003 560 V652 M959 606 L1003 560.5 M1048 606 L1003 651.5"/>
<path d="M1070.9 606 H1162.9 M1116.9 560 V652 M1072.9 606 L1116.9 560.5 M1161.9 606 L1116.9 651.5"/>
<path d="M1185 606 H1277 M1231 560 V652 M1187 606 L1231 560.5 M1276 606 L1231 651.5"/>
</g>
<g fill="none" stroke="#8c8c8c" stroke-width="1.2">
<circle cx="889.2" cy="266.1" r="4"/>
<circle cx="1003" cy="266.1" r="4"/>
<circle cx="1116.9" cy="266.1" r="4"/>
<circle cx="1231" cy="266.1" r="4"/>
<circle cx="889.2" cy="608" r="4"/>
<circle cx="1003" cy="608" r="4"/>
<circle cx="1116.9" cy="608" r="4"/>
<circle cx="1231" cy="608" r="4"/>
</g>
<path d="M763.5 295.1 L779.6 332 L796.4 295.1 M757.4 361.5 L816.5 361.5 L757.4 392.4 L816.5 392.4 M757.3 416.5 L816 436.5 L757.3 455.6 M774 424.5 L774 448 M757.3 480.3 L816 480.3 L782 500 L816 519.4 L757.3 519.4 M816 549.2 L757.3 549.2 M758.4 549.2 L758.4 575 M789.2 549.2 L789.2 567.7 M815 549.2 L815 575" fill="none" stroke="#a0a0a0" stroke-width="6.8" stroke-linecap="round" stroke-linejoin="round"/>
<path d="M1322.7 275.9 L1337.9 313 L1354.9 275.9 M1372 337.7 L1315.9 356.6 L1372 373.6 M1315.9 394.5 L1372 413.4 L1315.9 432.3 M1336 402 L1336 424.8 M1372 457 L1315.9 457 L1315.9 481.6 M1372 506.2 L1326 506.2 Q1315.9 506.2 1315.9 516 L1315.9 530.5 Q1315.9 540.3 1326 540.3 L1372 540.3 M1372 568.7 L1315.9 568.7 M1315.9 568.7 L1315.9 593.3 M1345.5 568.7 L1345.5 585.8 M1372 568.7 L1372 593.3" fill="none" stroke="#a0a0a0" stroke-width="6.8" stroke-linecap="round" stroke-linejoin="round"/>
<path d="M1282.62 557.38 L1282.62 567.55 L1286.14 572.07 L1295.10 572.07 L1298.30 568.68 L1298.30 562.58 L1295.10 556.93 L1291.90 556.93 L1290.14 559.64 M1290.14 580.43 L1290.14 559.41 M1309.56 573.20 L1305.91 568.23 L1306.76 557.38 L1311.39 550.60 L1315.04 550.60 L1318.69 555.57 L1317.84 566.42 L1313.21 573.20 L1309.56 573.20 M1308.34 566.42 L1316.26 557.38 M1327.30 570.94 L1329.30 572.75 L1327.30 574.56 L1327.30 570.94 M1340.55 561.90 L1337.30 559.19 L1337.30 553.54 L1340.55 550.60 L1347.05 550.60 L1350.30 553.54 L1350.30 559.19 L1347.05 561.90 L1340.55 561.90 L1337.30 564.61 L1337.30 570.26 L1340.55 573.20 L1347.05 573.20 L1350.30 570.26 L1350.30 564.61 L1347.05 561.90" fill="none" stroke="#a0a0a0" stroke-width="1.60" stroke-linecap="round" stroke-linejoin="round" transform="rotate(90 1282.30 573.20)"/>
<path d="M715.5 697 V706.5 M715.5 702 H942 M939.5 697 V702 M942 702 V706.5" stroke="#000" stroke-width="1" fill="none"/>
<text x="816.2" y="700.5" font-size="8.5" fill="#111" textLength="19.5" lengthAdjust="spacingAndGlyphs">5mm</text>
<text x="819.4" y="710.5" font-size="8.5" fill="#111" textLength="18" lengthAdjust="spacingAndGlyphs">0.2in</text>
<!-- variant table -->
<rect x="710.5" y="718.5" width="717" height="92" fill="#ececec" stroke="#1a8fd8" stroke-width="1"/>
<rect x="711" y="719" width="716" height="20" fill="#ffffff"/>
<g fill="#e2e2e2"><rect x="886" y="719" width="1" height="20"/><rect x="918" y="719" width="1" height="20"/><rect x="970" y="719" width="1" height="20"/></g>
<path d="M796 723 L799.5 719.5 L803 723" fill="none" stroke="#666" stroke-width="0.9"/>
<text x="715.5" y="733" font-size="12" fill="#222" textLength="42" lengthAdjust="spacingAndGlyphs">Package</text>
<text x="923.8" y="733" font-size="12" fill="#222" textLength="35.5" lengthAdjust="spacingAndGlyphs">Variant</text>
<rect x="711" y="739" width="716" height="16" fill="#0b8fd6"/>
<rect x="732.5" y="739.5" width="153" height="15" fill="none" stroke="#ff8a2a" stroke-width="1" stroke-dasharray="1,1" shape-rendering="crispEdges"/>
<g font-size="12" fill="#222">
<text x="734.3" y="750.7" fill="#ffffff" textLength="127.3" lengthAdjust="spacingAndGlyphs">H_OPA[1C]_TL_DIP8[1-5]</text>
<text x="734.3" y="766.8" textLength="138.2" lengthAdjust="spacingAndGlyphs">H_OPA[1C]_TL_DIP8[1-5]_K</text>
<text x="734.3" y="782.8" textLength="149" lengthAdjust="spacingAndGlyphs">H_OPA[1C]_TL_DIP8[1-5]_K_S</text>
<text x="734.3" y="798.9" textLength="138.2" lengthAdjust="spacingAndGlyphs">H_OPA[1C]_TL_DIP8[1-5]_S</text>
<text x="922.5" y="750.7" fill="#ffffff">"</text>
<text x="922.7" y="766.8" textLength="11.5" lengthAdjust="spacingAndGlyphs">_K</text>
<text x="922.7" y="782.8" textLength="21" lengthAdjust="spacingAndGlyphs">_K_S</text>
<text x="922.7" y="798.9" textLength="11" lengthAdjust="spacingAndGlyphs">_S</text>
</g>
<g fill="none" stroke="#22a84c" stroke-width="2.6" stroke-linecap="square">
<path d="M975 746.5 L978.5 750 L985 743" stroke="#1f9a5a"/>
<path d="M975 762.5 L978.5 766 L985 759"/>
<path d="M975 778.5 L978.5 782 L985 775"/>
<path d="M975 794.5 L978.5 798 L985 791"/>
</g>
<!-- buttons -->
<rect x="710.5" y="817.5" width="355" height="25" rx="3.5" fill="#ffffff" stroke="#7c7c7c"/>
<rect x="1072.5" y="817.5" width="355" height="25" rx="3.5" fill="#ffffff" stroke="#7c7c7c"/>
<rect x="710.5" y="849.5" width="355" height="25" rx="3.5" fill="#ffffff" stroke="#7c7c7c"/>
<path d="M1056.5 828 L1063 828 L1059.75 833 Z" fill="#555"/>
<rect x="1072" y="849" width="356" height="26" fill="#ececec"/>
<rect x="1072" y="849" width="356" height="2" fill="#8c8c8c"/>
<rect x="1072" y="849" width="2" height="26" fill="#8c8c8c"/>
<rect x="1072" y="874" width="356" height="1" fill="#ffffff"/>
<g font-size="12" fill="#222">
<text x="874.5" y="833.5" textLength="20.4" lengthAdjust="spacingAndGlyphs">New</text>
<text x="1228.5" y="833.5" textLength="42" lengthAdjust="spacingAndGlyphs">Connect</text>
<text x="873.4" y="865.8" textLength="28.5" lengthAdjust="spacingAndGlyphs">Prefix</text>
<text x="1076.3" y="865.8" textLength="16" lengthAdjust="spacingAndGlyphs">OA</text>
<text x="710.5" y="892.7" textLength="27.5" lengthAdjust="spacingAndGlyphs">Value</text>
<text x="973" y="893.2" textLength="15.4" lengthAdjust="spacingAndGlyphs">Off</text>
<text x="1214.5" y="893.2" textLength="14.5" lengthAdjust="spacingAndGlyphs">On</text>
</g>
<circle cx="959.1" cy="889" r="7.3" fill="#ffffff" stroke="#555" stroke-width="1"/>
<circle cx="959.1" cy="889" r="3.2" fill="#555"/>
<circle cx="1200.5" cy="889" r="7.3" fill="#ffffff" stroke="#555" stroke-width="1"/>
<!-- description panel -->
<rect x="71.5" y="728.5" width="633" height="168" fill="#ffffff" stroke="#7a7a7a"/>
<g font-size="12">
<text x="78" y="744.5" font-weight="bold" fill="#0000ee" textLength="68.5" lengthAdjust="spacingAndGlyphs">Description</text>
<rect x="78" y="746" width="68.5" height="1" fill="#0000ee"/>
<text x="78" y="780.7" fill="#222" textLength="52.5" lengthAdjust="spacingAndGlyphs">Keyword =</text>
<text x="78" y="792.6" fill="#0000ee" textLength="41" lengthAdjust="spacingAndGlyphs">[A]/non</text>
<rect x="78" y="794" width="43" height="1" fill="#0000ee"/>
<text x="78" y="804.6" fill="#0000ee" textLength="41" lengthAdjust="spacingAndGlyphs">[K]/non</text>
<rect x="78" y="806" width="43" height="1" fill="#0000ee"/>
<text x="78" y="816.6" fill="#0000ee" textLength="42" lengthAdjust="spacingAndGlyphs">[M]/non</text>
<rect x="78" y="818" width="43" height="1" fill="#0000ee"/>
<text x="78" y="828.6" fill="#0000ee" textLength="41" lengthAdjust="spacingAndGlyphs">[S]/non</text>
<rect x="78" y="830" width="43" height="1" fill="#0000ee"/>
<text x="78" y="840.6" fill="#222" textLength="64.5" lengthAdjust="spacingAndGlyphs">[Data Sheet]</text>
</g>
<!-- tech table -->
<rect x="549" y="736" width="148" height="64" fill="#ececec" stroke="#8e8e8e" stroke-width="2"/>
<rect x="549" y="736" width="148" height="16" fill="#d0d0d0"/>
<g fill="#8a8a8a">
<rect x="548" y="752" width="150" height="1"/><rect x="548" y="768" width="150" height="1"/><rect x="548" y="784" width="150" height="1"/>
<rect x="632" y="735" width="1" height="66"/>
</g>
<g fill="#fafafa"><rect x="549" y="753" width="83" height="1"/><rect x="633" y="753" width="64" height="1"/><rect x="549" y="769" width="83" height="1"/><rect x="633" y="769" width="64" height="1"/><rect x="549" y="785" width="83" height="1"/><rect x="633" y="785" width="64" height="1"/></g>
<g font-size="12">
<text x="551" y="748" font-weight="bold" fill="#0000ee" textLength="79" lengthAdjust="spacingAndGlyphs">Technologies</text>
<rect x="551" y="749" width="79" height="1" fill="#0000ee"/>
<text x="634.3" y="748" font-weight="bold" fill="#0000ee" textLength="61.5" lengthAdjust="spacingAndGlyphs">Attributes</text>
<rect x="634" y="749" width="62" height="1" fill="#0000ee"/>
<text x="551" y="764.3" fill="#222" textLength="44.5" lengthAdjust="spacingAndGlyphs">TL061CP</text>
<text x="551" y="780.3" fill="#222" textLength="44.5" lengthAdjust="spacingAndGlyphs">TL071CP</text>
<text x="551" y="796.3" fill="#222" textLength="44.5" lengthAdjust="spacingAndGlyphs">TL081CP</text>
</g>
<!-- status bar -->
<rect x="1" y="896" width="1431" height="1.3" fill="#7d7d7d"/>
<g fill="#d0d0d0"><rect x="1376" y="898" width="1" height="24"/><rect x="1387" y="898" width="1" height="24"/><rect x="1413" y="898" width="1" height="24"/></g>

</svg>
</body></html>
